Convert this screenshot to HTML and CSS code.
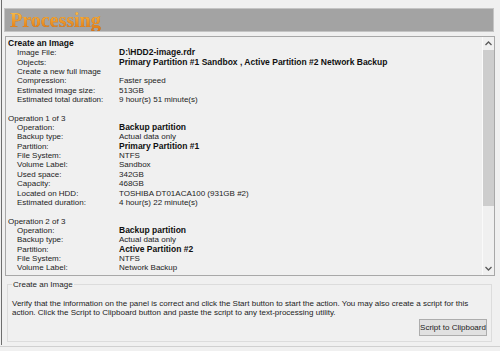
FILE: index.html
```html
<!DOCTYPE html>
<html>
<head>
<meta charset="utf-8">
<link rel="stylesheet" href="styles.css">
</head>
<body>
<div class="app">
  <div class="titlebar"><span class="title">Processing</span></div>
  <div class="panel">
    <div class="content">
      <div class="head b">Create an Image</div>
      <div class="row"><span class="k">Image File:</span><span class="v b">D:\HDD2-image.rdr</span></div>
      <div class="row"><span class="k">Objects:</span><span class="v b">Primary Partition #1 Sandbox , Active Partition #2 Network Backup</span></div>
      <div class="row"><span class="k">Create a new full image</span></div>
      <div class="row"><span class="k">Compression:</span><span class="v">Faster speed</span></div>
      <div class="row"><span class="k">Estimated image size:</span><span class="v">513GB</span></div>
      <div class="row"><span class="k">Estimated total duration:</span><span class="v">9 hour(s) 51 minute(s)</span></div>
      <div class="blank"></div>
      <div class="head">Operation 1 of 3</div>
      <div class="row"><span class="k">Operation:</span><span class="v b">Backup partition</span></div>
      <div class="row"><span class="k">Backup type:</span><span class="v">Actual data only</span></div>
      <div class="row"><span class="k">Partition:</span><span class="v b">Primary Partition #1</span></div>
      <div class="row"><span class="k">File System:</span><span class="v">NTFS</span></div>
      <div class="row"><span class="k">Volume Label:</span><span class="v">Sandbox</span></div>
      <div class="row"><span class="k">Used space:</span><span class="v">342GB</span></div>
      <div class="row"><span class="k">Capacity:</span><span class="v">468GB</span></div>
      <div class="row"><span class="k">Located on HDD:</span><span class="v">TOSHIBA DT01ACA100 (931GB #2)</span></div>
      <div class="row"><span class="k">Estimated duration:</span><span class="v">4 hour(s) 22 minute(s)</span></div>
      <div class="blank"></div>
      <div class="head">Operation 2 of 3</div>
      <div class="row"><span class="k">Operation:</span><span class="v b">Backup partition</span></div>
      <div class="row"><span class="k">Backup type:</span><span class="v">Actual data only</span></div>
      <div class="row"><span class="k">Partition:</span><span class="v b">Active Partition #2</span></div>
      <div class="row"><span class="k">File System:</span><span class="v">NTFS</span></div>
      <div class="row"><span class="k">Volume Label:</span><span class="v">Network Backup</span></div>
      <div class="row"><span class="k">Used space:</span><span class="v">487GB</span></div>
    </div>
    <div class="scrollbar">
      <div class="arrow"><svg width="7" height="5" viewBox="0 0 7 5"><polyline points="0.5,4 3.5,1 6.5,4" fill="none" stroke="#5a5a5a" stroke-width="1.3"/></svg></div>
      <div class="thumb"></div>
      <div class="track"></div>
      <div class="arrow"><svg width="7" height="5" viewBox="0 0 7 5"><polyline points="0.5,1 3.5,4 6.5,1" fill="none" stroke="#5a5a5a" stroke-width="1.3"/></svg></div>
    </div>
  </div>
  <fieldset class="group">
    <legend>Create an Image</legend>
    <p class="desc">Verify that the information on the panel is correct and click the Start button to start the action. You may also create a script for this<br>action. Click the Script to Clipboard button and paste the script to any text-processing utility.</p>
    <div class="actions"><button class="btn">Script to Clipboard</button></div>
  </fieldset>
</div>
<div class="footer"></div>
</body>
</html>
```
FILE: styles.css
```css
html, body {
  margin: 0;
  padding: 0;
  background: #f0f0f0;
  font-family: "Liberation Sans", Arial, sans-serif;
  font-size: 8px;
  color: #1c1c1c;
}
.app {
  margin-left: 1px;
  border-left: 1px solid #6e6e6e;
  height: 345px;
  box-sizing: border-box;
  padding: 8px 6px 0 2px;
}
.titlebar {
  height: 24px;
  box-sizing: border-box;
  background: #a3a3a3;
  border: 1px solid #c4c4c4;
  padding-left: 5px;
  display: flex;
  align-items: center;
}
.title {
  font-family: "Liberation Serif", "Times New Roman", serif;
  font-weight: bold;
  font-size: 20px;
  line-height: 22px;
  background: linear-gradient(#f8c858 0%, #f0a030 45%, #dc7410 100%);
  -webkit-background-clip: text;
  background-clip: text;
  color: transparent;
  filter: drop-shadow(0 0 0.7px rgba(170, 85, 10, 0.8));
}
.panel {
  margin: 4px -1px 0 1px;
  height: 240px;
  box-sizing: border-box;
  border: 1px solid #a8a8a8;
  display: flex;
  background: #f0f0f0;
}
.content {
  flex: 1;
  overflow: hidden;
  padding: 2px 0 0 2px;
  line-height: 9.35px;
}
.head { white-space: nowrap; }
.b { font-weight: bold; color: #111; font-size: 8.5px; letter-spacing: 0; }
.row {
  display: grid;
  grid-template-columns: 102px auto;
  padding-left: 9px;
  white-space: nowrap;
}
.blank { height: 9.35px; }
.scrollbar {
  width: 11px;
  display: flex;
  flex-direction: column;
  background: #f0f0f0;
  border-left: 1px solid #fafafa;
}
.arrow {
  height: 13px;
  display: flex;
  align-items: center;
  justify-content: center;
}
.thumb {
  height: 156px;
  background: #cdcdcd;
}
.track { flex: 1; }
.group {
  margin: 4px 2px 0 3px;
  height: 62px;
  box-sizing: border-box;
  border: 1px solid #dcdcdc;
  padding: 0 0 0 4px;
  min-width: 0;
}
.group legend {
  padding: 0 1px;
  line-height: 9px;
}
.desc {
  margin: 10px 0 0 0;
  line-height: 9.4px;
}
.actions {
  display: flex;
  justify-content: flex-end;
  padding-right: 4px;
  margin-top: 1px;
}
.btn {
  font-family: "Liberation Sans", Arial, sans-serif;
  font-size: 8px;
  color: #1c1c1c;
  width: 68px;
  height: 17px;
  padding: 0;
  background: #e1e1e1;
  border: 1px solid #adadad;
}
.footer {
  border-top: 1px solid #d0d0d0;
  height: 6px;
  background: #f0f0f0;
  margin-top: 1px;
}
```
